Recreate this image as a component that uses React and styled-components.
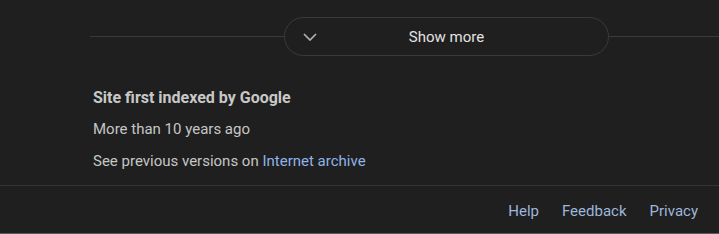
import React from "react";
import styled, { createGlobalStyle } from "styled-components";

const Global = createGlobalStyle`
    html, body {
        margin: 0;
        padding: 0;
        background: #1f1f1f;
    }
    body {
        font-family: Roboto, "Liberation Sans", Arial, sans-serif;
    }
`;

const Page = styled.div`
    width: 719px;
    height: 234px;
    display: flex;
    flex-flow: column;
    background: #1f1f1f;
    border-bottom: 1px solid #5a5a5a;
    box-sizing: border-box;
    overflow: hidden;
`;

const MoreRow = styled.div`
    display: flex;
    align-items: center;
    padding: 17px 0 0 90px;
`;

const Rule = styled.div`
    flex: ${(p) => (p.$grow ? 1 : "none")};
    width: ${(p) => (p.$grow ? "auto" : "194px")};
    height: 1px;
    background: #3a3a3a;
`;

const Pill = styled.button`
    width: 325px;
    height: 39px;
    box-sizing: border-box;
    display: grid;
    grid-template-columns: 40px 1fr 40px;
    align-items: center;
    padding: 0;
    border: 1px solid #3a3a3a;
    border-radius: 20px;
    background: #1f1f1f;
    color: #e3e3e3;
    font-family: Roboto, "Liberation Sans", Arial, sans-serif;
    font-size: 15px;
    cursor: pointer;
    & > svg {
        justify-self: start;
        margin-left: 18px;
    }
    & > span {
        text-align: center;
        padding-top: 1px;
    }
`;

const Info = styled.div`
    display: flex;
    flex-flow: column;
    padding: 33px 0 0 93px;
    color: #c4c7c5;
    font-size: 15px;
    height: 129px;
    box-sizing: border-box;
`;

const Title = styled.div`
    font-weight: bold;
    font-size: 16px;
    color: #c8c8c8;
    line-height: 18px;
    margin-bottom: 13px;
`;

const Line = styled.div`
    line-height: 18px;
    margin-bottom: 14px;
`;

const Link = styled.a`
    color: #8fb3e8;
    text-decoration: none;
`;

const Footer = styled.div`
    flex: 1;
    display: flex;
    justify-content: flex-end;
    align-items: center;
    gap: 23px;
    padding: 2px 21px 0 0;
    border-top: 1px solid #343434;
    font-size: 15px;
    & > a {
        color: #9db6db;
    }
`;

function Chevron() {
    return (
        <svg width="14" height="8" viewBox="0 0 14 8" fill="none">
            <path d="M1 1l6 6 6-6" stroke="#b0b0b0" strokeWidth="1.7" />
        </svg>
    );
}

export default function App() {
    return (
        <Page>
            <Global />
            <MoreRow>
                <Rule />
                <Pill>
                    <Chevron />
                    <span>Show more</span>
                    <i />
                </Pill>
                <Rule $grow />
            </MoreRow>
            <Info>
                <Title>Site first indexed by Google</Title>
                <Line>More than 10 years ago</Line>
                <Line>
                    See previous versions on <Link href="#">Internet archive</Link>
                </Line>
            </Info>
            <Footer>
                <Link href="#">Help</Link>
                <Link href="#">Feedback</Link>
                <Link href="#">Privacy</Link>
            </Footer>
        </Page>
    );
}
